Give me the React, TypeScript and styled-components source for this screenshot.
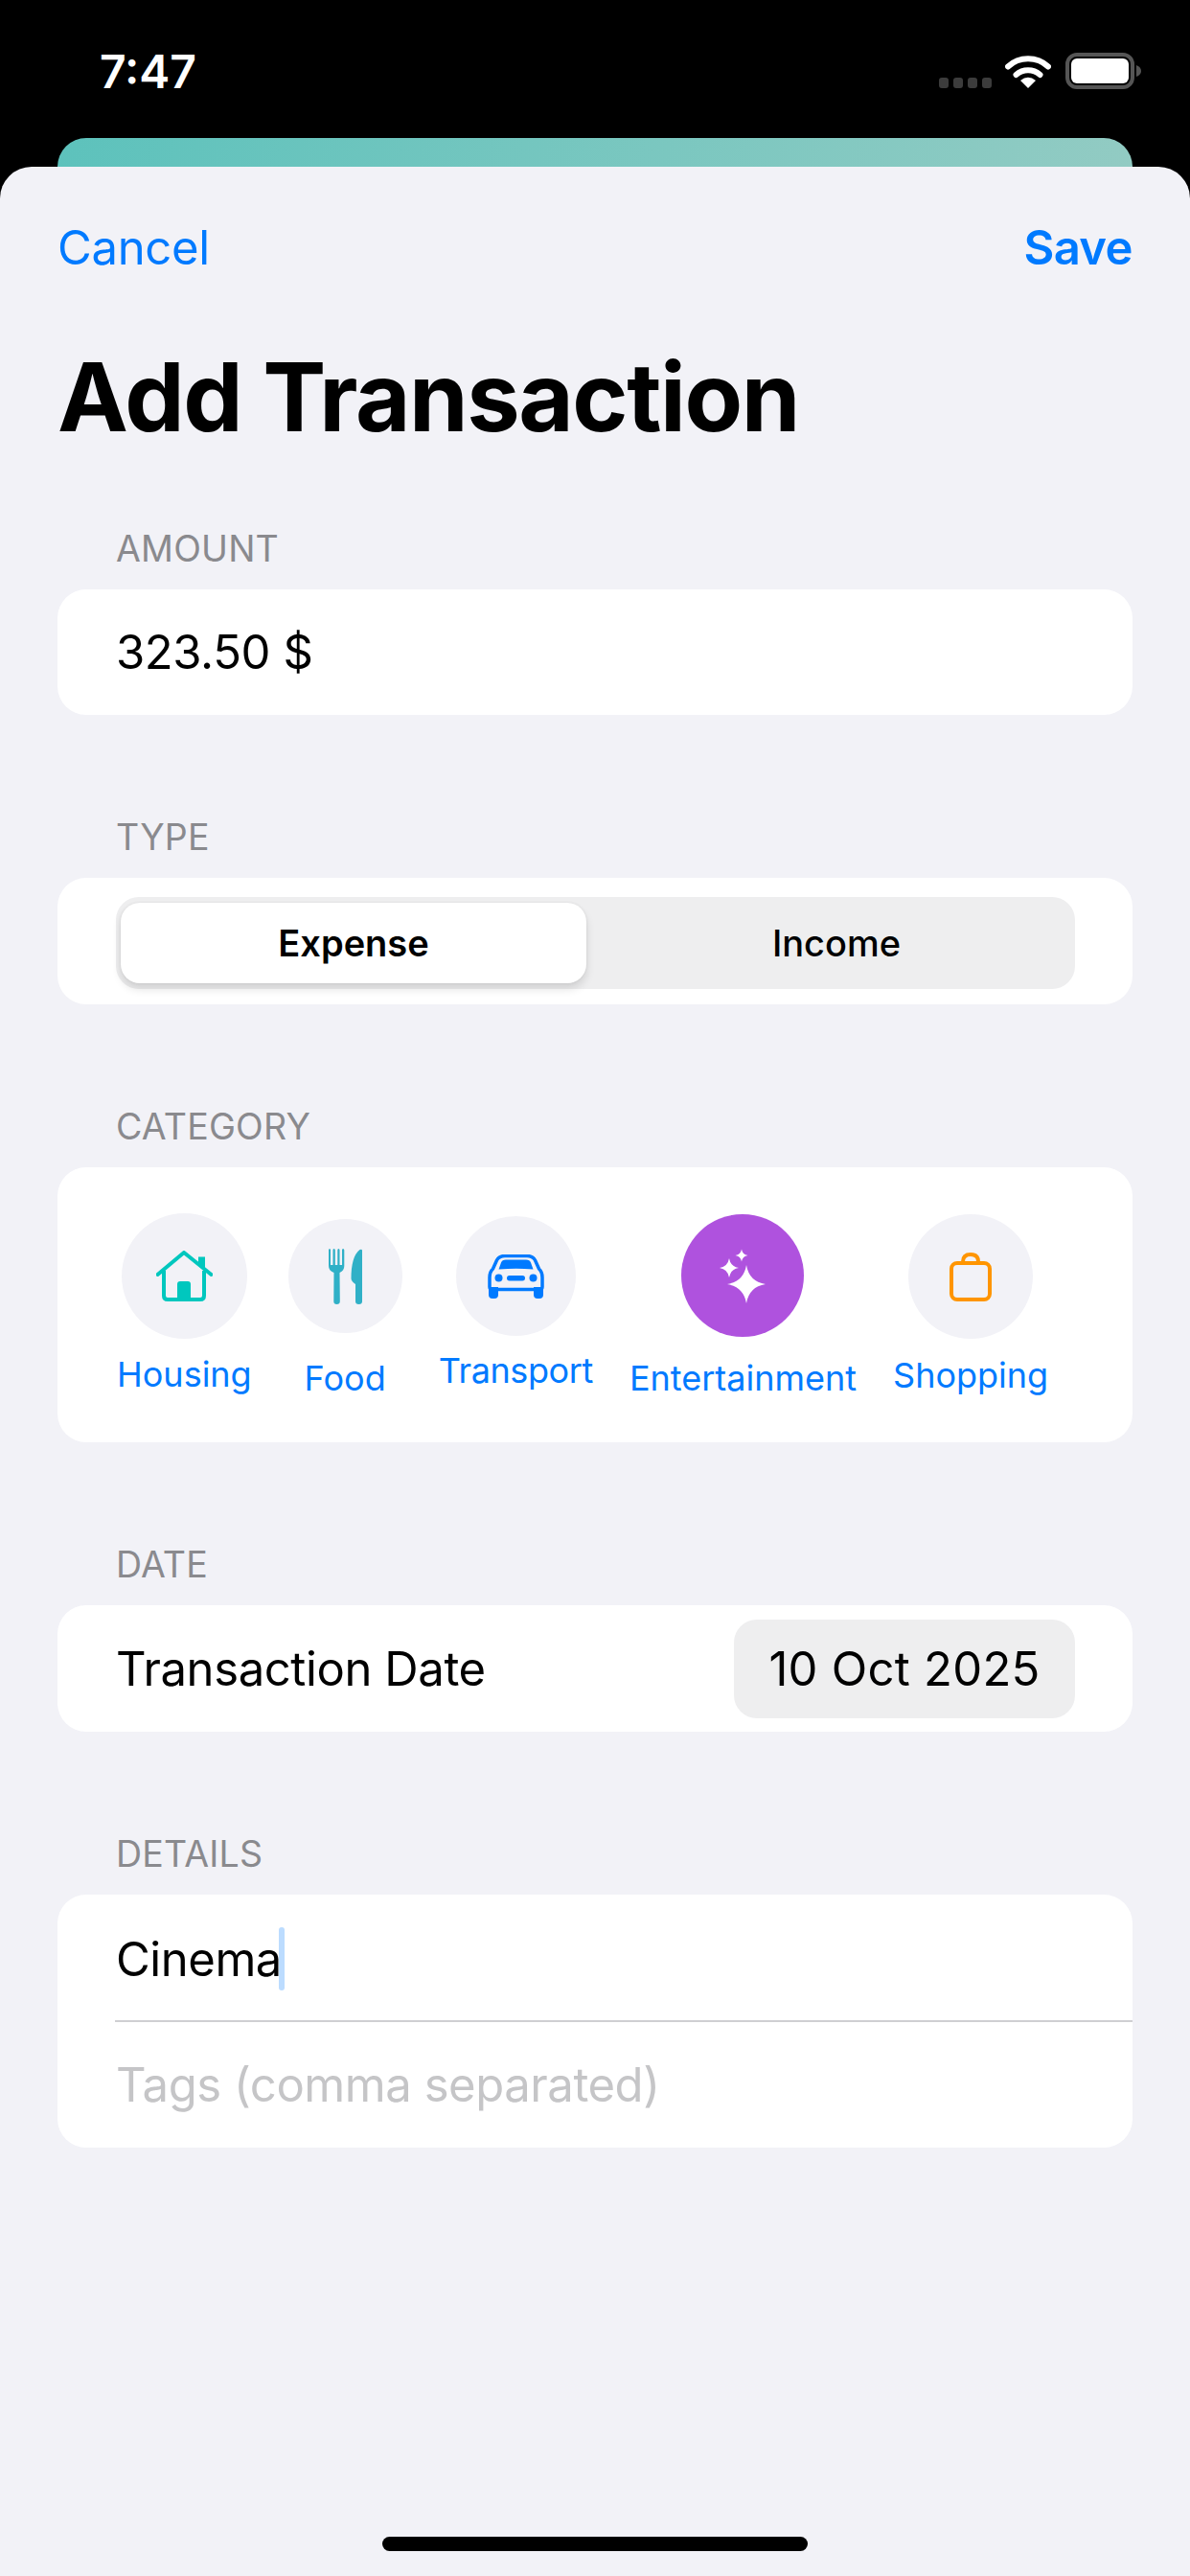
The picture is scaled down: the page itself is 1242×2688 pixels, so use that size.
import React from "react";
import styled, { createGlobalStyle } from "styled-components";

const Global = createGlobalStyle`
  html, body { margin: 0; padding: 0; background: #000; }
  body { font-family: Inter, "Liberation Sans", sans-serif; -webkit-font-smoothing: antialiased; }
  * { box-sizing: border-box; }
`;

const Screen = styled.div`
  width: 1242px;
  height: 2688px;
  display: flex;
  flex-direction: column;
  background: #000;
  overflow: hidden;
`;
const StatusBar = styled.div`
  height: 144px;
  flex: none;
  display: flex;
  align-items: flex-start;
  justify-content: space-between;
  padding: 47px 50px 0 104px;
`;
const Time = styled.span`
  font-size: 48px;
  font-weight: 600;
  line-height: 56px;
  color: #fff;
`;
const StatusIcons = styled.div`
  display: flex;
  align-items: flex-start;
  padding-top: 8px;
`;
const Dots = styled.div`
  display: flex;
  gap: 5px;
  margin: 26px 14px 0 0;
`;
const Dot = styled.i`
  display: block;
  width: 10px;
  height: 11px;
  border-radius: 3px;
  background: #3c3c3c;
`;
const BackCard = styled.div`
  height: 30px;
  flex: none;
  margin: 0 60px;
  border-radius: 30px 30px 0 0;
  background: linear-gradient(100deg, #5dc2bc, #92cbc3);
`;
const Sheet = styled.div`
  flex: 1;
  display: flex;
  flex-direction: column;
  background: #f2f2f7;
  border-radius: 33px 33px 0 0;
  padding: 55px 60px 26px;
`;
const Nav = styled.div`
  display: flex;
  justify-content: space-between;
  height: 60px;
  align-items: center;
`;
const NavButton = styled.span<{ $strong?: boolean }>`
  font-size: 49px;
  line-height: 60px;
  color: #007aff;
  letter-spacing: ${(p) => (p.$strong ? -0.6 : -0.3)}px;
  font-weight: ${(p) => (p.$strong ? 600 : 400)};
`;
const Title = styled.h1`
  margin: 64px 0 0;
  font-size: 99px;
  line-height: 122px;
  font-weight: 700;
  letter-spacing: -1.4px;
  color: #000;
`;
const Section = styled.section<{ $first?: boolean }>`
  margin-top: ${(p) => (p.$first ? 75 : 105)}px;
`;
const SectionLabel = styled.div`
  height: 44px;
  line-height: 46px;
  padding-left: 61px;
  margin-bottom: 21px;
  font-size: 37.500px;
  letter-spacing: 0.2px;
  color: #8a8a8e;
`;
const Card = styled.div`
  background: #fff;
  border-radius: 30px;
`;
const Row = styled.div<{ $h?: number }>`
  height: ${(p) => p.$h ?? 131}px;
  display: flex;
  align-items: center;
  justify-content: space-between;
  padding: 0 60px 0 61px;
  font-size: 49px;
  letter-spacing: -0.400px;
  color: #000;
`;
const Segmented = styled.div`
  height: 96px;
  display: flex;
  flex: 1;
  margin-top: 4px;
  background: #eeeeef;
  border-radius: 24px;
  padding: 6px 5px;
`;
const Segment = styled.div<{ $active?: boolean }>`
  flex: ${(p) => (p.$active ? "0 0 486px" : 1)};
  display: flex;
  align-items: center;
  justify-content: center;
  padding-left: ${(p) => (p.$active ? 0 : 17)}px;
  letter-spacing: 0;
  font-size: 38px;
  font-weight: ${(p) => (p.$active ? 600 : 500)};
  color: #000;
  border-radius: 20px;
  background: ${(p) => (p.$active ? "#fff" : "transparent")};
  box-shadow: ${(p) => (p.$active ? "0 6px 10px rgba(0,0,0,.12), 0 0 3px rgba(0,0,0,.08)" : "none")};
`;
const Categories = styled.div`
  height: 287px;
  display: flex;
  align-items: flex-start;
  gap: 38px;
  padding-left: 62px;
`;
const Category = styled.div<{ $top: number }>`
  display: flex;
  flex-direction: column;
  align-items: center;
  margin-top: ${(p) => p.$top}px;
`;
const IconCircle = styled.div<{ $size: number; $active?: boolean }>`
  width: ${(p) => p.$size}px;
  height: ${(p) => p.$size}px;
  border-radius: 50%;
  display: flex;
  align-items: center;
  justify-content: center;
  background: ${(p) => (p.$active ? "#af52de" : "#f2f2f7")};
`;
const CategoryName = styled.span<{ $gap: number; $spacing: number }>`
  margin-top: ${(p) => p.$gap}px;
  font-size: 36px;
  line-height: 44px;
  letter-spacing: ${(p) => p.$spacing}px;
  color: #007aff;
  white-space: nowrap;
`;
const DatePill = styled.div`
  height: 103px;
  width: 356px;
  display: flex;
  align-items: center;
  justify-content: center;
  border-radius: 24px;
  background: #eeeeef;
  font-size: 49px;
  letter-spacing: 0.250px;
`;
const Field = styled.div<{ $top?: number }>`
  display: flex;
  align-items: center;
  height: 131px;
  padding-left: 61px;
  padding-top: ${(p) => p.$top ?? 0}px;
  font-size: 49px;
  letter-spacing: -0.450px;
  color: #000;
`;
const Placeholder = styled(Field)`
  color: #c5c5c7;
`;
const Caret = styled.i`
  display: block;
  width: 6px;
  height: 66px;
  margin-left: -3px;
  border-radius: 3px;
  background: #bcdcff;
`;
const Divider = styled.div`
  height: 2px;
  margin-left: 60px;
  background: #cfcfd2;
`;
const HomeBar = styled.div`
  width: 444px;
  height: 15px;
  margin: auto auto 0;
  border-radius: 8px;
  background: #000;
`;

const Wifi = () => (
  <svg width="48" height="37" viewBox="0 0 48 37" fill="none">
    <path d="M3 14.5A31 31 0 0 1 45 14.5" stroke="#fff" strokeWidth="6" strokeLinecap="round" />
    <path d="M11.5 23A19 19 0 0 1 36.5 23" stroke="#fff" strokeWidth="6" strokeLinecap="round" />
    <path d="M16 29Q24 22.500 32 29L24 37Z" fill="#fff" />
  </svg>
);
const Battery = () => (
  <svg width="80" height="38" viewBox="0 0 80 38" style={{ marginLeft: 15 }}>
    <rect x="2" y="2" width="68" height="34" rx="10" fill="none" stroke="#555" strokeWidth="4" />
    <rect x="6" y="6" width="60" height="26" rx="6" fill="#fff" />
    <path d="M74 13Q79 15 79 19Q79 23 74 25Z" fill="#555" />
  </svg>
);
const HouseIcon = () => (
  <svg width="59" height="53" viewBox="0 0 59 53" fill="none">
    <path d="M1.500 25L29 2L57.500 25" stroke="#00c7be" strokeWidth="4" strokeLinecap="round" strokeLinejoin="round" />
    <path d="M8 21V47Q8 51 12 51H46Q50 51 50 47V21" stroke="#00c7be" strokeWidth="4" />
    <path d="M44 6.500H51V20L44 14Z" fill="#00c7be" />
    <path d="M22 35Q22 32 25 32H33Q36 32 36 35V51H22Z" fill="#00c7be" />
  </svg>
);
const ForkKnifeIcon = () => (
  <svg width="35" height="58" viewBox="0 0 35 58" fill="#30b0c7">
    <path d="M0 1.500Q0 0 1 0Q2 0 2 1.500V17H4.500V1.500Q4.500 0 5.500 0Q6.800 0 6.800 1.500V17H9.300V1.500Q9.300 0 10.300 0Q11.500 0 11.500 1.500V17H14V1.500Q14 0 15 0Q16.300 0 16.300 1.500V18Q16.300 23 11.500 25L11.800 55Q11.800 58 8.500 58Q5.300 58 5.300 55L5.500 25Q0 23 0 18Z" />
    <path d="M35 2V55Q35 58 31.500 58Q28 58 28 55V37Q23.500 34 23.500 31Q23.500 8 32.500 1Q35 0 35 2Z" />
  </svg>
);
const CarIcon = () => (
  <svg width="59" height="46" viewBox="0 0 59 46" fill="none">
    <path d="M2 24Q2 18 5.500 15L9.500 6Q12 1.500 18 1.500H41Q47 1.500 49.500 6L53.500 15Q57 18 57 24V34Q57 36.500 54 36.500H5Q2 36.500 2 34Z" stroke="#007aff" strokeWidth="3.500" />
    <path d="M11.500 15.500L14 8.500Q15 5.500 19 5.500H40Q44 5.500 45 8.500L47.500 15.500Q30 14 11.500 15.500Z" fill="#007aff" />
    <circle cx="11.500" cy="24.500" r="4" fill="#007aff" />
    <circle cx="47.500" cy="24.500" r="4" fill="#007aff" />
    <rect x="20" y="22" width="19" height="5.500" rx="2.700" fill="#007aff" />
    <path d="M1 34H11V42Q11 46 7 46H5Q1 46 1 42ZM48 34H58V42Q58 46 54 46H52Q48 46 48 42Z" fill="#007aff" />
  </svg>
);
const star = (cx: number, cy: number, r: number) => {
  const k = r * 0.14;
  return `M${cx} ${cy - r}Q${cx + k} ${cy - k} ${cx + r} ${cy}Q${cx + k} ${cy + k} ${cx} ${cy + r}Q${cx - k} ${cy + k} ${cx - r} ${cy}Q${cx - k} ${cy - k} ${cx} ${cy - r}Z`;
};
const SparklesIcon = () => (
  <svg width="48" height="58" viewBox="0 0 48 58" fill="#fff">
    <path d={star(28, 38, 20)} />
    <path d={star(10, 21, 10)} />
    <path d={star(23, 8, 6.500)} />
  </svg>
);
const BagIcon = () => (
  <svg width="44" height="51" viewBox="0 0 44 51" fill="none" stroke="#ff9500" strokeWidth="4">
    <rect x="2" y="11" width="40" height="38" rx="6" />
    <path d="M14 11V9.500Q14 2 22 2Q30 2 30 9.500V11" />
  </svg>
);

const items = [
  { name: "Housing", top: 48, size: 131, gap: 15, spacing: 0, icon: <HouseIcon /> },
  { name: "Food", top: 54, size: 119, gap: 25, spacing: 0.1, icon: <ForkKnifeIcon /> },
  { name: "Transport", top: 51, size: 125, gap: 14, spacing: -0.4, icon: <CarIcon /> },
  { name: "Entertainment", top: 49, size: 128, gap: 21, spacing: 0, icon: <SparklesIcon />, active: true },
  { name: "Shopping", top: 49, size: 130, gap: 16, spacing: 0, icon: <BagIcon /> },
];

export default function App() {
  return (
    <Screen>
      <Global />
      <StatusBar>
        <Time>7:47</Time>
        <StatusIcons>
          <Dots>
            <Dot />
            <Dot />
            <Dot />
            <Dot />
          </Dots>
          <Wifi />
          <Battery />
        </StatusIcons>
      </StatusBar>
      <BackCard />
      <Sheet>
        <Nav>
          <NavButton>Cancel</NavButton>
          <NavButton $strong>Save</NavButton>
        </Nav>
        <Title>Add Transaction</Title>
        <Section $first>
          <SectionLabel>AMOUNT</SectionLabel>
          <Card>
            <Row>323.50 $</Row>
          </Card>
        </Section>
        <Section>
          <SectionLabel>TYPE</SectionLabel>
          <Card>
            <Row $h={132}>
              <Segmented>
                <Segment $active>Expense</Segment>
                <Segment>Income</Segment>
              </Segmented>
            </Row>
          </Card>
        </Section>
        <Section>
          <SectionLabel>CATEGORY</SectionLabel>
          <Card>
            <Categories>
              {items.map((c) => (
                <Category key={c.name} $top={c.top}>
                  <IconCircle $size={c.size} $active={c.active}>
                    {c.icon}
                  </IconCircle>
                  <CategoryName $gap={c.gap} $spacing={c.spacing}>
                    {c.name}
                  </CategoryName>
                </Category>
              ))}
            </Categories>
          </Card>
        </Section>
        <Section>
          <SectionLabel>DATE</SectionLabel>
          <Card>
            <Row $h={132}>
              <span>Transaction Date</span>
              <DatePill>10 Oct 2025</DatePill>
            </Row>
          </Card>
        </Section>
        <Section>
          <SectionLabel>DETAILS</SectionLabel>
          <Card>
            <Field $top={3}>
              <span>Cinema</span>
              <Caret />
            </Field>
            <Divider />
            <Placeholder>Tags (comma separated)</Placeholder>
          </Card>
        </Section>
        <HomeBar />
      </Sheet>
    </Screen>
  );
}
